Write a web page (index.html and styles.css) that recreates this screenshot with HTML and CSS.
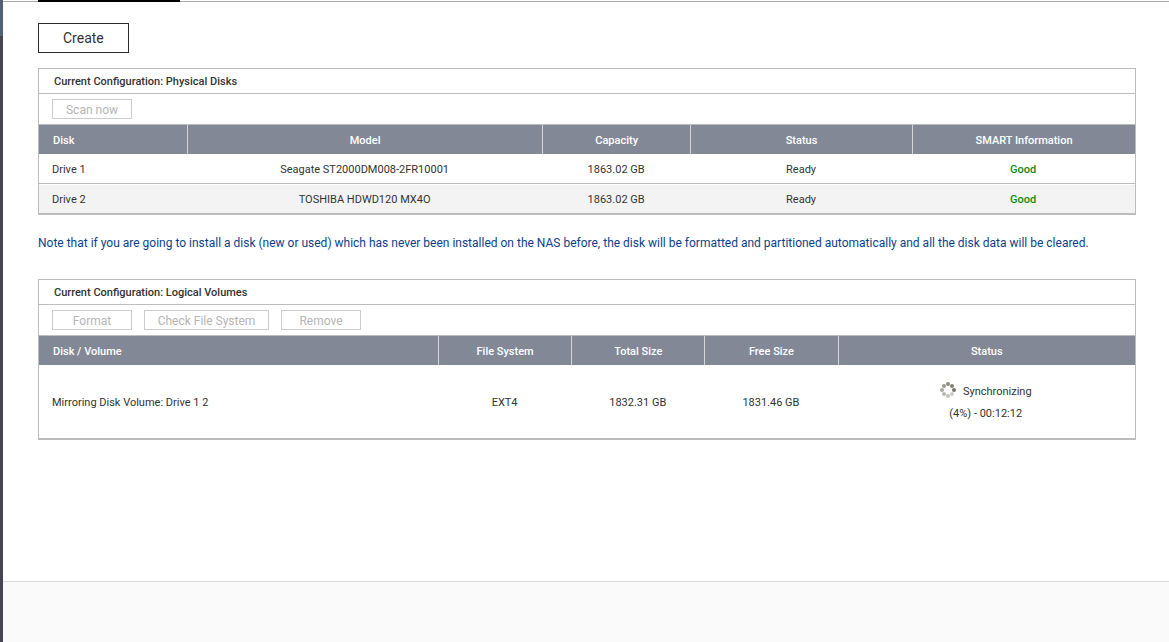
FILE: index.html
```html
<!DOCTYPE html>
<html lang="en">
<head>
<meta charset="utf-8">
<title>Volume Management</title>
<link rel="stylesheet" href="styles.css">
</head>
<body>
<div class="app">
  <div class="rail"><div class="rail-active"></div></div>
  <div class="page">
    <div class="tabs"><div class="tab-active"></div></div>
    <main class="content">
      <button class="create" type="button">Create</button>

      <section class="panel">
        <h2 class="panel-title">Current Configuration: Physical Disks</h2>
        <div class="toolbar">
          <button class="action" type="button" disabled>Scan now</button>
        </div>
        <table class="grid">
          <colgroup><col class="c-disk"><col class="c-model"><col class="c-capacity"><col class="c-state"><col></colgroup>
          <thead>
            <tr><th>Disk</th><th>Model</th><th>Capacity</th><th>Status</th><th>SMART Information</th></tr>
          </thead>
          <tbody>
            <tr><td>Drive 1</td><td>Seagate ST2000DM008-2FR10001</td><td>1863.02 GB</td><td>Ready</td><td class="good">Good</td></tr>
            <tr><td>Drive 2</td><td>TOSHIBA HDWD120 MX4O</td><td>1863.02 GB</td><td>Ready</td><td class="good">Good</td></tr>
          </tbody>
        </table>
      </section>

      <p class="note">Note that if you are going to install a disk (new or used) which has never been installed on the NAS before, the disk will be formatted and partitioned automatically and all the disk data will be cleared.</p>

      <section class="panel">
        <h2 class="panel-title">Current Configuration: Logical Volumes</h2>
        <div class="toolbar">
          <button class="action" type="button" disabled>Format</button>
          <button class="action action-wide" type="button" disabled>Check File System</button>
          <button class="action" type="button" disabled>Remove</button>
        </div>
        <table class="grid volumes">
          <colgroup><col class="c-volume"><col class="c-size"><col class="c-size"><col class="c-size"><col></colgroup>
          <thead>
            <tr><th>Disk / Volume</th><th>File System</th><th>Total Size</th><th>Free Size</th><th>Status</th></tr>
          </thead>
          <tbody>
            <tr>
              <td>Mirroring Disk Volume: Drive 1 2</td><td>EXT4</td><td>1832.31 GB</td><td>1831.46 GB</td>
              <td>
                <div class="sync">
                  <svg class="spinner" width="16" height="16" viewBox="0 0 16 16" aria-hidden="true">
                    <circle cx="8" cy="2" r="2" fill="#8d8b81"/>
                    <circle cx="12" cy="4" r="2" fill="#827f74"/>
                    <circle cx="14" cy="8" r="2" fill="#77746a"/>
                    <circle cx="12" cy="12" r="2" fill="#cfcdc7"/>
                    <circle cx="8" cy="14" r="2" fill="#c4c2bb"/>
                    <circle cx="4" cy="12" r="2" fill="#b8b6ae"/>
                    <circle cx="2" cy="8" r="2" fill="#aaa8a0"/>
                    <circle cx="4" cy="4" r="2" fill="#9b998f"/>
                  </svg>
                  <span>Synchronizing</span>
                </div>
                <div class="progress">(4%) - 00:12:12</div>
              </td>
            </tr>
          </tbody>
        </table>
      </section>
    </main>
    <footer class="footer"></footer>
  </div>
</div>
</body>
</html>
```

FILE: styles.css
```css
* { box-sizing: border-box; }

body {
  margin: 0;
  background: #fff;
  color: #333;
  font: 11px/16px Roboto, "Liberation Sans", sans-serif;
}

button { font-family: inherit; }

.app { display: flex; min-height: 100vh; }

.rail { flex: 0 0 3px; background: #474552; }
.rail-active { height: 36px; background: #536073; }

.page { flex: 1; min-width: 0; display: flex; flex-direction: column; }

.tabs { height: 2px; padding-left: 35px; border-bottom: 1px solid #a9a9a9; }
.tab-active { width: 142px; height: 2px; background: #000; }

.content { flex: 1; padding: 21px 33px 0 35px; }

.create {
  display: block;
  height: 30px;
  padding: 0 24px;
  border: 1px solid #2b2b2b;
  background: #fff;
  color: #333;
  font-size: 14px;
}

.panel {
  margin-top: 15px;
  border: 1px solid #bcbcbc;
  border-bottom-width: 2px;
}

.panel-title {
  margin: 0;
  padding: 5px 15px 3px;
  border-bottom: 1px solid #bcbcbc;
  font-size: 11px;
  font-weight: 500;
  line-height: 16px;
}

.toolbar {
  display: flex;
  gap: 12px;
  padding: 5px 13px;
  border-bottom: 1px solid #bcbcbc;
}

.action {
  min-width: 80px;
  height: 20px;
  padding: 2px 12px 0;
  border: 1px solid #ccc;
  background: #fff;
  color: #b5b5b5;
  font-size: 12px;
  line-height: 16px;
}
.action-wide { min-width: 125px; }

.grid {
  width: 100%;
  table-layout: fixed;
  border-collapse: separate;
  border-spacing: 0;
}

.c-disk { width: 13.6%; }
.c-model { width: 32.4%; }
.c-capacity { width: 13.5%; }
.c-state { width: 20.25%; }
.c-volume { width: 36.5%; }
.c-size { width: 12.15%; }

th {
  height: 29px;
  padding: 2px 0 0;
  background: #828896;
  border-right: 1px solid #d3d5da;
  box-shadow: inset 0 1px #828896;
  color: #fff;
  font-weight: 500;
}
th:last-child { border-right: 0; }
th:first-child { padding-left: 14px; text-align: left; }

td { height: 29px; padding: 2px 2px 0 0; text-align: center; }
td:first-child { padding-left: 13px; text-align: left; }
tr + tr td {
  height: 30px;
  border-top: 1px solid #bcbcbc;
  background: #f3f3f3;
  box-shadow: inset 0 1px #fff;
}

.good { color: #0f8a0f; font-weight: 500; }

.note {
  margin: 20px 0 28px;
  color: #0b3f8c;
  font-size: 12px;
  line-height: 16px;
}
.note + .panel { margin-top: 0; }

.volumes td { height: 73px; }

.sync { display: flex; justify-content: center; gap: 7px; line-height: 18px; }
.spinner { margin-top: -1px; }
.progress { margin-top: 4px; line-height: 18px; }

.footer { height: 61px; border-top: 1px solid #d9d9d9; background: #fafafa; }
```
